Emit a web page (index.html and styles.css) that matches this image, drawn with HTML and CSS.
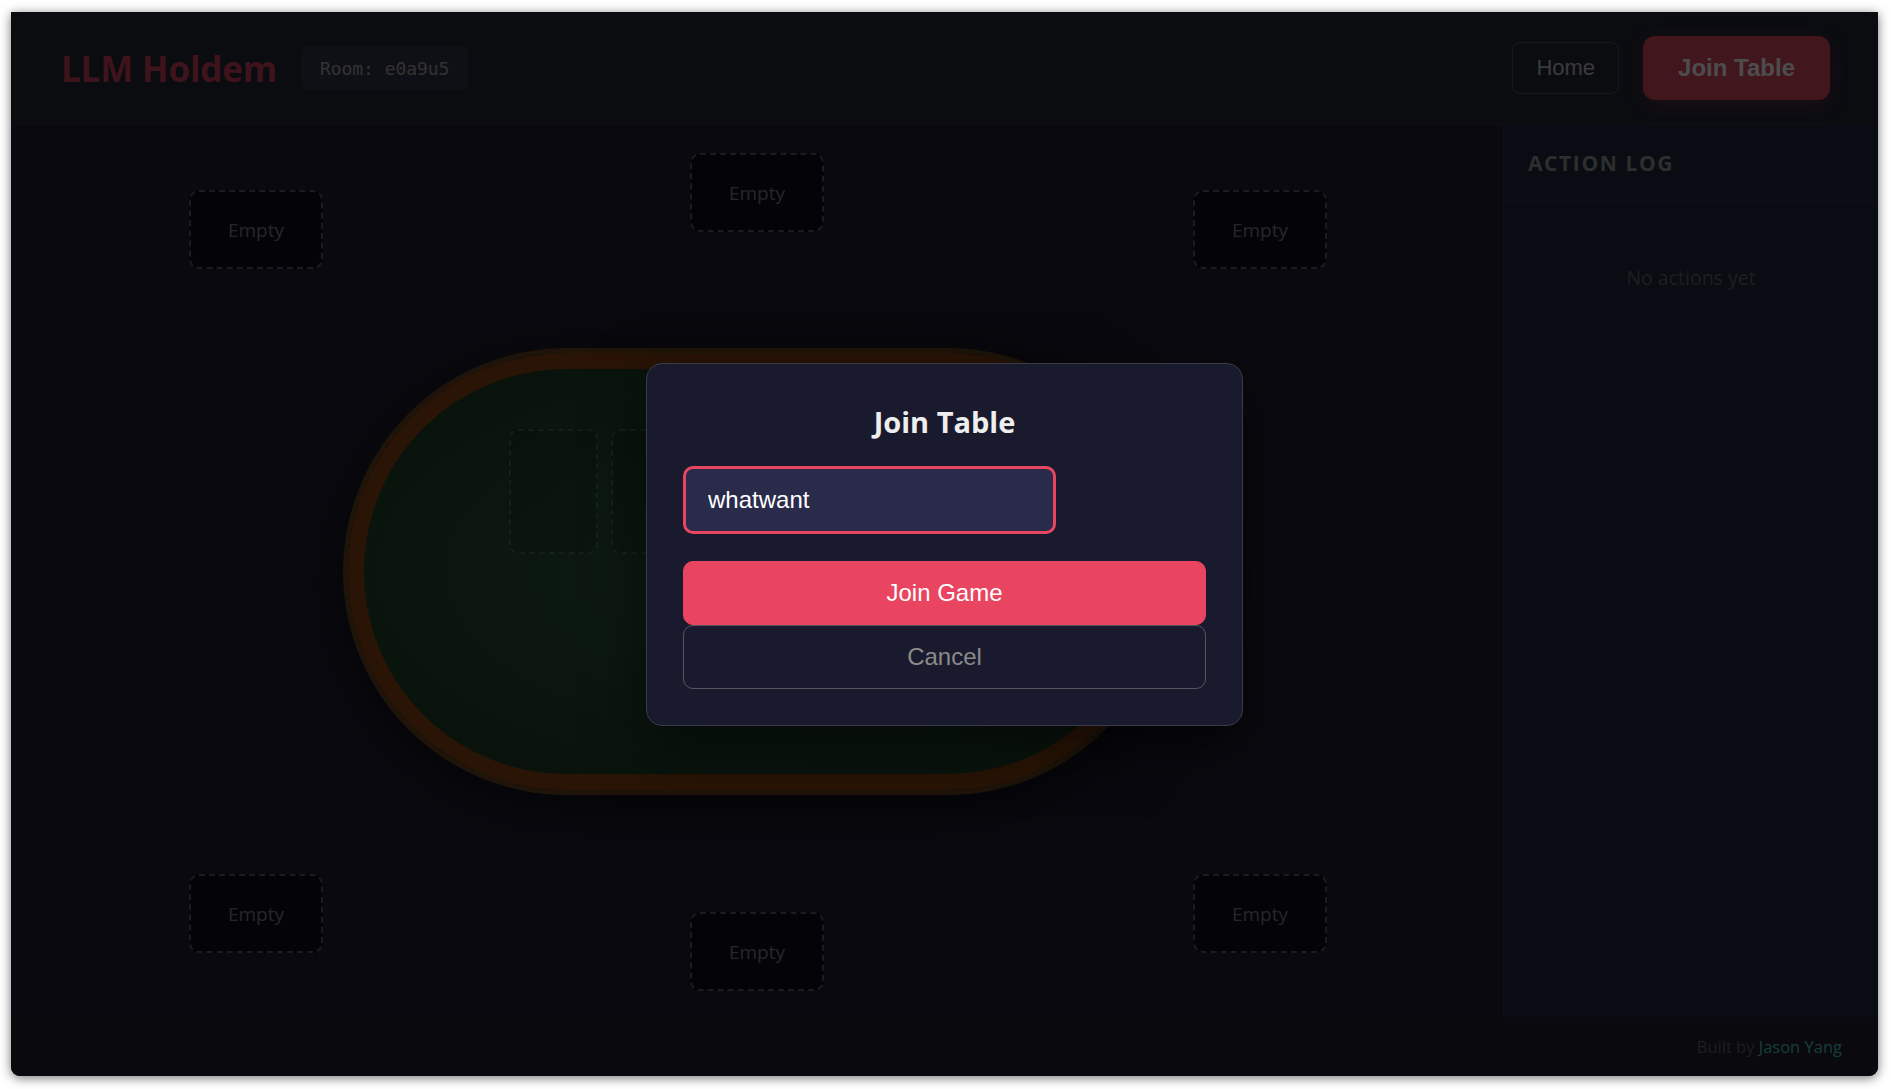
FILE: index.html
```html
<!DOCTYPE html>
<html lang="en">
<head>
<meta charset="utf-8">
<title>LLM Holdem</title>
<link rel="stylesheet" href="styles.css">
</head>
<body>
<div class="window">
  <header class="topbar">
    <div class="brand">
      <h1 class="logo">LLM Holdem</h1>
      <span class="room">Room: e0a9u5</span>
    </div>
    <nav class="nav">
      <button class="btn-home">Home</button>
      <button class="btn-join">Join Table</button>
    </nav>
  </header>

  <div class="content">
    <main class="arena">
      <div class="seat seat-tl">Empty</div>
      <div class="seat seat-tc">Empty</div>
      <div class="seat seat-tr">Empty</div>
      <div class="seat seat-bl">Empty</div>
      <div class="seat seat-bc">Empty</div>
      <div class="seat seat-br">Empty</div>

      <div class="table">
        <div class="felt">
          <div class="board">
            <div class="card-slot"></div>
            <div class="card-slot"></div>
            <div class="card-slot"></div>
            <div class="card-slot"></div>
            <div class="card-slot"></div>
          </div>
        </div>
      </div>
    </main>

    <aside class="log">
      <div class="log-head">ACTION LOG</div>
      <div class="log-body">
        <p class="log-empty">No actions yet</p>
      </div>
    </aside>
  </div>

  <footer class="footer">
    <span class="built">Built by <span class="author">Jason Yang</span></span>
  </footer>

  <div class="overlay">
    <div class="modal">
      <h2 class="modal-title">Join Table</h2>
      <input class="name-input" type="text" value="whatwant">
      <div class="modal-actions">
        <button class="btn-primary">Join Game</button>
        <button class="btn-cancel">Cancel</button>
      </div>
    </div>
  </div>
</div>
</body>
</html>
```

FILE: styles.css
```css
html, body {
  margin: 0;
  padding: 0;
  background: #ffffff;
}

body {
  font-family: "Open Sans", "Noto Sans", sans-serif;
  width: 1891px;
  height: 1089px;
  overflow: hidden;
}

.window {
  position: relative;
  margin: 12px 13px 13px 11px;
  width: 1867px;
  height: 1064px;
  display: flex;
  flex-direction: column;
  background: #1e1e32;
  border-radius: 0 0 9px 9px;
  overflow: hidden;
  box-shadow: 0 2px 11px rgba(0, 0, 0, 0.55);
}

/* header */
.topbar {
  flex: 0 0 auto;
  height: 112px;
  display: flex;
  align-items: center;
  justify-content: space-between;
  padding: 0 48px 0 50px;
  background: #222838;
  border-bottom: 1px solid rgba(255, 255, 255, 0.06);
}

.brand {
  display: flex;
  align-items: center;
  gap: 24px;
}

.logo {
  margin: 0;
  font-size: 35px;
  font-weight: 700;
  color: #d0405a;
  letter-spacing: -0.2px;
}

.room {
  display: flex;
  align-items: center;
  height: 44px;
  padding: 0 19px;
  border-radius: 9px;
  background: rgba(255, 255, 255, 0.08);
  font-family: "DejaVu Sans Mono", "Liberation Mono", monospace;
  font-size: 18px;
  letter-spacing: -0.05px;
  color: #a8a8a8;
}

.nav {
  display: flex;
  align-items: center;
  gap: 24px;
}

.btn-home {
  font-family: "Liberation Sans", Arial, sans-serif;
  font-size: 22px;
  padding: 12px 23px;
  color: #c4c4c4;
  background: transparent;
  border: 1px solid rgba(255, 255, 255, 0.2);
  border-radius: 8px;
}

.btn-join {
  font-family: "Liberation Sans", Arial, sans-serif;
  font-size: 24px;
  font-weight: 700;
  padding: 18px 35px;
  color: #ffffff;
  background: #de4a62;
  border: 0;
  border-radius: 12px;
  box-shadow: 0 4px 18px rgba(233, 69, 96, 0.3);
}

/* body row */
.content {
  flex: 1 1 auto;
  display: flex;
  min-height: 0;
}

.arena {
  position: relative;
  flex: 1 1 auto;
  display: flex;
  align-items: center;
  justify-content: center;
  background: #1e1e32;
}

.seat {
  position: absolute;
  width: 130px;
  height: 75px;
  display: flex;
  align-items: center;
  justify-content: center;
  border: 2px dashed #5e5e66;
  border-radius: 10px;
  background: rgba(0, 0, 0, 0.45);
  color: #808086;
  font-size: 19px;
}

.seat-tl { left: 178px; top: 65px; }
.seat-tc { left: 679px; top: 28px; }
.seat-tr { left: 1182px; top: 65px; }
.seat-bl { left: 178px; top: 749px; }
.seat-bc { left: 679px; top: 787px; }
.seat-br { left: 1182px; top: 749px; }

.table {
  width: 786px;
  height: 405px;
  border: 16px solid #8b4513;
  border-radius: 230px;
  box-shadow: 0 0 0 5px #654321, 0 12px 70px rgba(0, 0, 0, 0.6);
  background: radial-gradient(ellipse at center, #2f5e40 0%, #234a31 55%, #1a3a26 100%);
  margin-top: 1px;
}

.felt {
  height: 100%;
  display: flex;
  flex-direction: column;
  align-items: center;
  padding-top: 60px;
  box-sizing: border-box;
}

.board {
  display: flex;
  gap: 13px;
}

.card-slot {
  width: 85px;
  height: 121px;
  border: 2px dashed rgba(255, 255, 255, 0.18);
  border-radius: 9px;
  background: rgba(0, 0, 0, 0.1);
}

/* action log */
.log {
  flex: 0 0 375px;
  display: flex;
  flex-direction: column;
  background: #212b40;
  border-left: 1px solid rgba(255, 255, 255, 0.04);
  box-sizing: border-box;
}

.log-head {
  height: 76px;
  display: flex;
  align-items: center;
  padding-left: 24px;
  border-bottom: 1px solid rgba(255, 255, 255, 0.08);
  font-size: 21px;
  font-weight: 700;
  letter-spacing: 1.6px;
  color: #9a9a9a;
}

.log-body {
  padding: 20px;
}

.log-empty {
  margin: 0;
  padding: 42px 0;
  text-align: center;
  font-size: 19.5px;
  line-height: 28px;
  color: #666;
}

/* footer */
.footer {
  flex: 0 0 59px;
  display: flex;
  align-items: center;
  justify-content: flex-end;
  padding-right: 36px;
  background: #1e1e30;
  font-size: 16.5px;
  color: #666;
}

.author {
  color: #4ecdc4;
}

/* modal */
.overlay {
  position: absolute;
  inset: 0;
  display: flex;
  align-items: center;
  justify-content: center;
  background: rgba(0, 0, 0, 0.7);
}

.modal {
  width: 597px;
  box-sizing: border-box;
  padding: 36px;
  background: #1a1a2e;
  border: 1px solid #3a3a48;
  border-radius: 16px;
  box-shadow: 0 20px 60px rgba(0, 0, 0, 0.5);
}

.modal-title {
  margin: 0 0 22px;
  text-align: center;
  font-size: 29px;
  line-height: 44px;
  font-weight: 700;
  color: #eeeeee;
}

.name-input {
  display: block;
  width: 373px;
  box-sizing: border-box;
  font-family: "Liberation Sans", Arial, sans-serif;
  font-size: 24px;
  padding: 17px 22px;
  color: #ffffff;
  background: #2a2a4a;
  border: 3px solid #e94560;
  border-radius: 10px;
  outline: none;
}

.modal-actions {
  display: flex;
  flex-direction: column;
  margin-top: 27px;
}

.btn-primary,
.btn-cancel {
  font-family: "Liberation Sans", Arial, sans-serif;
  font-size: 24px;
  padding: 17px;
  border-radius: 10px;
}

.btn-primary {
  color: #ffffff;
  background: #e94560;
  border: 1px solid #e94560;
}

.btn-cancel {
  color: #8a8a8a;
  background: transparent;
  border: 1px solid #555560;
}
```
